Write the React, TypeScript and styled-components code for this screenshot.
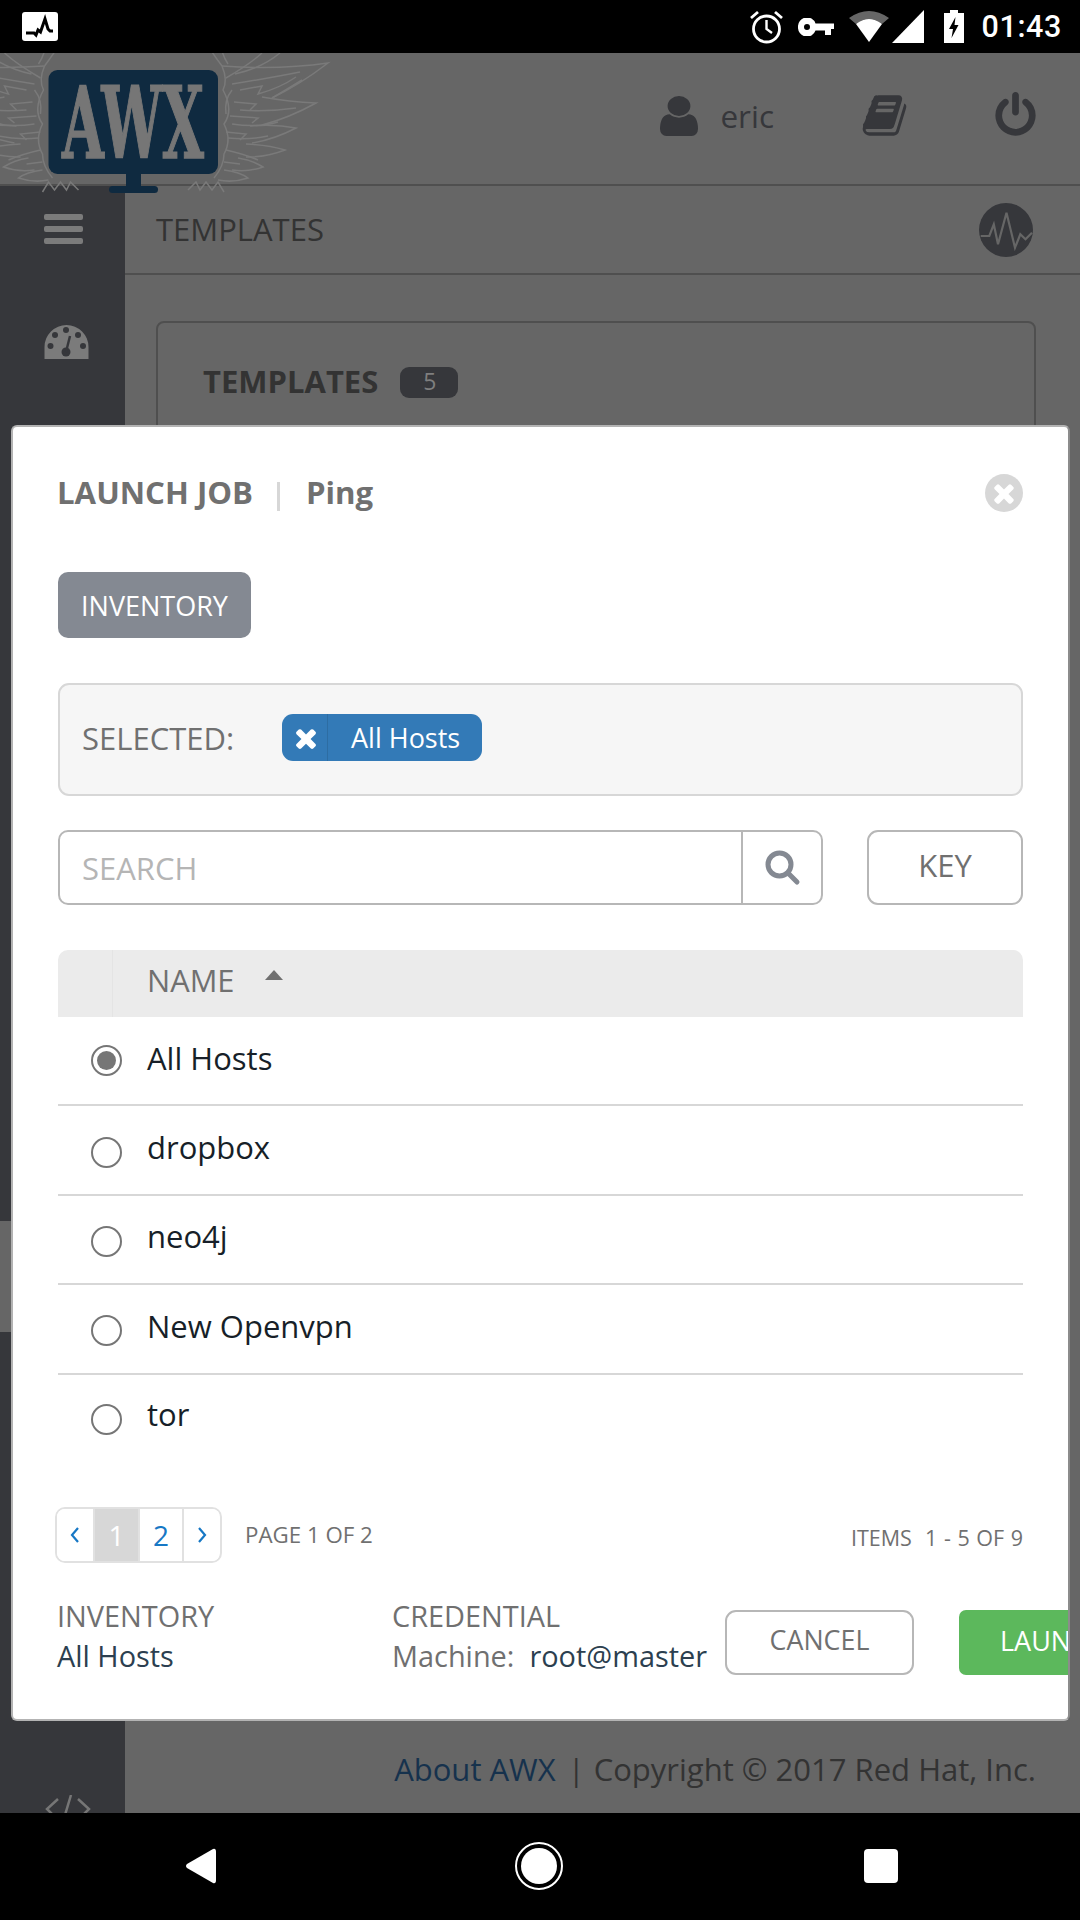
import React from 'react';
import styled, { createGlobalStyle } from 'styled-components';

const Global = createGlobalStyle`
  html, body { margin: 0; padding: 0; background: #000; }
  #root { width: 1080px; height: 1920px; overflow: hidden; }
  * { box-sizing: border-box; }
`;

const Page = styled.div`
  width: 1080px; height: 1920px; display: flex; flex-direction: column;
  font-family: "Open Sans", "Liberation Sans", sans-serif; background: #000;
`;
const StatusBar = styled.div`
  height: 53px; flex: none; background: #000; display: flex; align-items: center; padding: 0 18px 0 22px; color: #fff;
`;
const AppBadge = styled.svg`width: 36px; height: 29px;`;
const StatusRight = styled.div`margin-left: auto; display: flex; align-items: center;`;
const StatusGlyph = styled.svg<{ $mr: number }>`display: block; margin-right: ${p => p.$mr}px;`;
const Clock = styled.span`
  font-family: Roboto, "Liberation Sans", sans-serif; font-size: 30.5px; font-weight: 500; color: #fff; letter-spacing: 0.6px;
`;

const Screen = styled.div`position: relative; flex: 1; overflow: hidden; background: #666; display: flex; flex-direction: column;`;
const Header = styled.header`
  height: 133px; flex: none; border-bottom: 2px solid #4f4f4f; display: flex; align-items: center; justify-content: flex-end; padding: 0 41px 6px 0; position: relative; z-index: 2;
`;
const LogoArt = styled.svg`position: absolute; left: 0; top: 0; overflow: visible;`;
const UserName = styled.span`font-size: 31.5px; color: #36373b; margin: 0 87px 0 22px;`;
const HeadIcon = styled.svg<{ $mr?: number }>`display: block; fill: #36373b; margin-right: ${p => p.$mr ?? 0}px;`;
const Body = styled.div`flex: 1; display: flex; min-height: 0;`;
const Sidebar = styled.nav`width: 125px; flex: none; background: #36373b; display: flex; flex-direction: column; overflow: hidden;`;
const SideItem = styled.div<{ $h: number; $active?: boolean; $mt?: number }>`
  height: ${p => p.$h}px; margin-top: ${p => p.$mt ?? 0}px; flex: none; display: flex; align-items: flex-start; padding-left: 44px;
  background: ${p => (p.$active ? '#666' : 'transparent')};
`;
const Burger = styled.div`width: 39px; margin-top: 28px; display: flex; flex-direction: column; gap: 6px;`;
const BurgerBar = styled.span`height: 6px; border-radius: 2px; background: #7b7b7b;`;
const Gauge = styled.svg`display: block; margin-top: 49px;`;
const CodeIcon = styled.svg`display: block; margin-left: 1px;`;
const Main = styled.main`flex: 1; display: flex; flex-direction: column; min-width: 0;`;
const Crumbs = styled.div`
  height: 89px; flex: none; border-bottom: 2px solid #4f4f4f; display: flex; align-items: center; justify-content: space-between; padding: 0 47px 0 31px;
`;
const CrumbText = styled.span`font-size: 31px; color: #333; position: relative; top: -1px;`;
const Card = styled.section`
  flex: 1; margin: 46px 44px 0 31px; border: 2px solid #4f4f4f; border-radius: 8px; padding: 38px 45px; min-height: 0;
  display: flex; align-items: flex-start; gap: 22px;
`;
const CardTitle = styled.h2`margin: 0; font-size: 31px; font-weight: 700; line-height: 40px; color: #333;`;
const Badge = styled.span`
  width: 58px; height: 31px; margin-top: 6px; background: #36373b; border-radius: 9px; color: #7f7f7f; font-size: 23px; line-height: 1; display: flex; align-items: center; justify-content: center; padding: 0 0 3px 1px;
`;
const Footer = styled.footer`
  height: 93px; flex: none; padding: 27px 44px 0 0; text-align: right; font-size: 31px; line-height: 44px; color: #333; white-space: nowrap;
`;
const FooterLink = styled.span`color: #16324d;`;
const FooterBar = styled.span`margin: 0 9px 0 12px;`;

const Modal = styled.div`
  position: absolute; z-index: 5; left: 11px; top: 372px; width: 1059px; height: 1296px; background: #fff;
  border: 2px solid #b3b3b3; border-right-color: #8c8c8c; border-radius: 6px; padding: 43px 45px 0 45px; overflow: hidden;
`;
const TitleRow = styled.div`height: 46px; display: flex; align-items: center; font-size: 31.2px; font-weight: 700; color: #707070; line-height: 46px;`;
const TitleText = styled.span`position: relative; top: -1px; left: -1px;`;
const TitleDivider = styled.span`width: 3px; height: 29px; background: #d7d7d7; margin: 6px 27px 0 23px;`;
const CloseBtn = styled.svg`margin-left: auto; display: block;`;
const Tab = styled.div`
  margin-top: 56px; width: 193px; height: 66px; border-radius: 10px; background: #848992; color: #fff; font-size: 27px; display: flex; align-items: center; justify-content: center;
`;
const SelectedBox = styled.div`
  margin-top: 45px; height: 113px; border: 2px solid #d7d7d7; border-radius: 11px; background: #f6f6f6; display: flex; align-items: center; padding: 0 0 0 22px;
`;
const SelectedLabel = styled.span`font-size: 31px; color: #707070; width: 200px; position: relative; top: -2px;`;
const Chip = styled.div`
  width: 200px; height: 47px; border-radius: 11px; background: #337ab7; color: #fff; display: flex; align-items: stretch; font-size: 27px; position: relative; top: -2px;
`;
const ChipClose = styled.div`width: 46px; border-right: 1px solid #2d6da3; display: flex; align-items: center; justify-content: center; padding: 1px 0 0 2px;`;
const ChipText = styled.span`padding-left: 23px; display: flex; align-items: center; padding-bottom: 1px;`;
const SearchRow = styled.div`margin-top: 34px; height: 75px; display: flex; gap: 44px;`;
const SearchGroup = styled.div`flex: 1; border: 2px solid #b7b7b7; border-radius: 10px; display: flex;`;
const SearchField = styled.div`flex: 1; padding-left: 22px; display: flex; align-items: center; font-size: 31px; color: #b5b5b5;`;
const SearchBtn = styled.div`width: 80px; border-left: 2px solid #b7b7b7; display: flex; align-items: center; justify-content: center; padding-left: 2px;`;
const OutlineBtn = styled.div<{ $w: number; $h: number; $fs: number }>`
  width: ${p => p.$w}px; height: ${p => p.$h}px; flex: none; border: 2.5px solid #b7b7b7; border-radius: 11px; color: #707070; font-size: ${p => p.$fs}px; display: flex; align-items: center; justify-content: center; padding-bottom: 6px;
`;
const Table = styled.div`margin-top: 45px;`;
const TableHead = styled.div`
  height: 67px; background: #ebebeb; border-radius: 10px 10px 0 0; display: flex; align-items: center; color: #707070; font-size: 30.8px;
`;
const HeadCheckCell = styled.div`width: 55px; height: 100%; border-right: 1px solid #e4e4e4;`;
const HeadName = styled.span`margin-left: 34px; position: relative; top: -4px;`;
const Caret = styled.span`
  width: 0; height: 0; margin: 0 0 0 31px; border-left: 9.5px solid transparent; border-right: 9.5px solid transparent; border-bottom: 10px solid #707070; position: relative; top: -9px;
`;
const Row = styled.div<{ $last?: boolean }>`
  height: ${p => (p.$last ? 85.4 : 89.4)}px; display: flex; align-items: center; border-bottom: ${p => (p.$last ? 'none' : '2.5px solid #d7d7d7')}; color: #171f28; font-size: 31px;
`;
const Radio = styled.span<{ $on?: boolean }>`
  width: 31px; height: 31px; margin: ${p => (p.$on ? 0 : 4)}px 0 0 33px; border: 2px solid #767676; border-radius: 50%; display: flex; align-items: center; justify-content: center; flex: none;
  &::after { content: ''; width: 19px; height: 19px; border-radius: 50%; background: ${p => (p.$on ? '#767676' : 'transparent')}; }
`;
const RowName = styled.span`margin-left: 25px; position: relative; top: -3px;`;
const PagerRow = styled.div`margin: 47px 0 0 -3px; height: 56px; display: flex; align-items: center;`;
const Pager = styled.div`height: 56px; width: 167px; border: 2.5px solid #e1e1e1; border-radius: 10px; display: flex; overflow: hidden; background: #fff;`;
const PageCell = styled.div<{ $w: number; $active?: boolean }>`
  width: ${p => p.$w}px; flex: none; display: flex; align-items: center; justify-content: center; font-size: 28px;
  color: ${p => (p.$active ? '#fff' : '#1778c5')}; background: ${p => (p.$active ? '#d7d7d7' : '#fff')};
  border-right: 2.5px solid #e1e1e1;
  &:last-child { border-right: none; }
`;
const PageLabel = styled.span`margin-left: 23px; font-size: 22.3px; color: #707070;`;
const ItemsLabel = styled.span`margin-left: auto; font-size: 21.5px; color: #707070; word-spacing: 1px; position: relative; top: 3px;`;
const Summary = styled.div`margin: 33px 0 0 -1px; display: flex; align-items: flex-start;`;
const SummaryCol = styled.div<{ $w: number }>`width: ${p => p.$w}px; flex: none; font-size: 28.9px; line-height: 40px; white-space: nowrap;`;
const SummaryLabel = styled.div`color: #707070;`;
const SummaryValue = styled.div`color: #2c3f50;`;
const SummaryMuted = styled.span`color: #707070; margin-right: 15px;`;
const ActionSlot = styled.div`margin-top: 14px; flex: none; display: flex; gap: 45px;`;
const LaunchBtn = styled.div`
  height: 65px; width: 180px; flex: none; background: #5cb85c; border-radius: 7px; color: #fff; font-size: 27px; display: flex; align-items: center; padding: 0 0 4px 41px;
`;
const NavBar = styled.div`
  height: 107px; flex: none; background: #000; display: flex; align-items: center; padding-left: 185px; padding-bottom: 1px;
`;
const NavBack = styled.svg`display: block; margin-right: 298px;`;
const HomeRing = styled.div`
  width: 48px; height: 48px; margin-right: 301px; border-radius: 50%; border: 2px solid #fff; background: #000;
  display: flex; align-items: center; justify-content: center;
  &::after { content: ''; width: 36px; height: 36px; border-radius: 50%; background: #fff; }
`;
const NavSquare = styled.div`width: 34px; height: 34px; border-radius: 4px; background: #fff;`;

const D = {
  user: 'M1536 1399q0 109-62.500 187t-150.500 78h-854q-88 0-150.500-78t-62.500-187q0-85 8.500-160.500t31.500-152 58.500-131 94-89 134.500-34.500q131 128 313 128t313-128q76 0 134.500 34.500t94 89 58.500 131 31.500 152 8.500 160.500zm-256-887q0 159-112.500 271.500t-271.500 112.500-271.500-112.500-112.500-271.500 112.500-271.500 271.500-112.500 271.500 112.500 112.500 271.500z',
  book: 'M1703 478q40 57 18 129l-275 906q-19 64-76.500 107.500t-122.500 43.500h-923q-77 0-148.500-53.500t-99.500-131.500q-24-67-2-127 0-4 3-27t4-37q1-8-3-21.500t-3-19.500q2-11 8-21t16.500-23.500 16.500-23.500q23-38 45-91.500t30-91.500q3-10 .5-30t-.5-28q3-11 17-28t17-23q21-36 42-92t25-90q1-9-2.500-32t.5-28q4-13 22-30.500t22-22.500q19-26 42.500-84.500t27.500-96.500q1-8-3-25.500t-2-26.500q2-8 9-18t18-23 17-21q8-12 16.500-30.500t15-35 16-36 19.500-32 26.500-23.500 36-11.500 47.500 5.500l-1 3q38-9 51-9h761q74 0 114 56t18 130l-274 906q-36 119-71.500 153.500t-128.500 34.500h-869q-27 0-38 15-11 16-1 43 24 70 144 70h923q29 0 56-15.500t35-41.500l300-987q7-22 5-57 38 15 59 43zm-1064 2q-4 13 2 22.500t20 9.500h608q13 0 25.500-9.500t16.500-22.500l21-64q4-13-2-22.500t-20-9.500h-608q-13 0-25.500 9.500t-16.500 22.500zm-83 256q-4 13 2 22.500t20 9.500h608q13 0 25.500-9.500t16.500-22.500l21-64q4-13-2-22.500t-20-9.500h-608q-13 0-25.500 9.500t-16.500 22.500z',
  power: 'M1664 896q0 156-61 298t-164 245-245 164-298 61-298-61-245-164-164-245-61-298q0-182 80.500-343t226.500-270q43-32 95.500-25t83.500 50q32 42 24.500 94.500t-49.500 84.500q-98 74-151.500 181t-53.500 228q0 104 40.500 198.500t109.500 163.500 163.500 109.500 198.500 40.500 198.500-40.500 163.500-109.500 109.500-163.500 40.500-198.500q0-121-53.500-228t-151.500-181q-42-32-49.500-84.500t24.500-94.500q31-43 84-50t95 25q146 109 226.500 270t80.500 343zm-640-768v640q0 52-38 90t-90 38-90-38-38-90v-640q0-52 38-90t90-38 90 38 38 90z',
  times: 'M1490 1322q0 40-28 68l-136 136q-28 28-68 28t-68-28l-294-294-294 294q-28 28-68 28t-68-28l-136-136q-28-28-28-68t28-68l294-294-294-294q-28-28-28-68t28-68l136-136q28-28 68-28t68 28l294 294 294-294q28-28 68-28t68 28l136 136q28 28 28 68t-28 68l-294 294 294 294q28 28 28 68z',
};

const feathers: [number, number, number, number, number, number, number, number][] = [
  [222, 16, 280, 20, 328, 13, 272, 48],
  [262, 47, 290, 52, 316, 53, 262, 75],
  [250, 76, 275, 74, 296, 78, 252, 93],
  [246, 94, 268, 95, 285, 100, 246, 107],
  [238, 108, 252, 110, 263, 117, 232, 120],
  [224, 120, 240, 122, 248, 128, 218, 130],
];
const veins = [
  'M232 34 Q270 28 300 22', 'M235 24 Q262 18 280 3', 'M240 40 L262 36 L258 44 Q280 38 296 27', 'M226 28 Q250 14 262 3',
  'M240 60 Q268 62 296 58', 'M234 52 L256 54 L250 60', 'M230 66 L258 68 L252 73', 'M232 74 Q258 78 278 72', 'M228 88 Q250 90 268 86',
  'M226 82 L246 84 L240 90', 'M226 100 Q244 104 258 110', 'M224 112 L240 114',
  'M226 64 Q224 50 232 40', 'M222 16 Q216 8 212 2', 'M228 14 Q224 8 222 1', 'M272 48 Q286 40 302 30',
  'M188 140 L196 132 L200 140 L206 132 L212 140 L218 132 L224 142',
];
const Wing = () => (
  <g fill="none" stroke="#7a7a7a" strokeWidth={1.5} transform="translate(0,-3)">
    {feathers.map((f, i) => (
      <path key={i} d={`M${f[0]} ${f[1]} Q${f[2]} ${f[3]} ${f[4]} ${f[5]} Q${(f[4] + f[6]) / 2} ${(f[5] + f[7]) / 2 + 4} ${f[6]} ${f[7]}`} />
    ))}
    {veins.map((v, i) => <path key={i} d={v} />)}
    <path d="M222 16 Q228 30 223 40 Q234 60 224 74 Q232 90 224 104 Q224 116 214 128" />
  </g>
);

export default function App() {
  const rows = ['All Hosts', 'dropbox', 'neo4j', 'New Openvpn', 'tor'];
  return (
    <Page>
      <Global />
      <StatusBar>
        <AppBadge viewBox="0 0 36 29">
          <rect width="36" height="29" rx="3" fill="#fff" />
          <path d="M4 21 H12 L14 23 L16 18 L18.500 20 L23 7 L26 17 L28 19 L31 19" fill="none" stroke="#000" strokeWidth="3" />
        </AppBadge>
        <StatusRight>
          <StatusGlyph $mr={15} width="33" height="35" viewBox="0 0 33 35">
            <circle cx="16.500" cy="20" r="13" fill="none" stroke="#fff" strokeWidth="2.800" />
            <path d="M16.500 11 V20 L22 24" fill="none" stroke="#fff" strokeWidth="2.400" />
            <path d="M1 9 L8 3 M32 9 L25 3" stroke="#fff" strokeWidth="2.800" />
          </StatusGlyph>
          <StatusGlyph $mr={15} width="36" height="18" viewBox="0 0 36 18">
            <path d="M0 9a9 9 0 0 1 17.500-3.500 H36 V11 H33 V17 H27 V12.500 H17.500 A9 9 0 0 1 0 9z M6 9a3 3 0 1 0 6 0a3 3 0 1 0-6 0z" fill="#fff" fillRule="evenodd" />
          </StatusGlyph>
          <StatusGlyph $mr={3} width="40" height="33" viewBox="0 0 40 33">
            <path d="M0 8 Q20 -6 40 8 L33 14 Q20 4 7 14z" fill="#666" />
            <path d="M7 14 Q20 4 33 14 L20 32z" fill="#fff" />
          </StatusGlyph>
          <StatusGlyph $mr={20} width="32" height="33" viewBox="0 0 32 33">
            <path d="M0 33 L32 0 V33z" fill="#fff" />
          </StatusGlyph>
          <StatusGlyph $mr={18} width="20" height="33" viewBox="0 0 20 33">
            <path d="M6 0 H14 V3 H20 V33 H0 V3 H6z" fill="#fff" />
            <path d="M11.500 7 L5 19 H9 L7.500 28 L14.500 15 H10.500z" fill="#000" />
          </StatusGlyph>
          <Clock>01:43</Clock>
        </StatusRight>
      </StatusBar>

      <Screen>
        <Header>
          <LogoArt width="340" height="145" viewBox="0 0 340 145">
            <Wing />
            <g transform="translate(266.500,0) scale(-1,1)"><Wing /></g>
            <rect x="48.500" y="17" width="169.500" height="104" rx="9" fill="#0f2a40" />
            <rect x="126" y="120" width="15" height="14" fill="#0f2a40" />
            <rect x="109" y="133" width="49" height="7" rx="3.500" fill="#0f2a40" />
            <text x="62" y="105" fontFamily='"DejaVu Serif", serif' fontWeight="700" fontSize="100" fill="#767676" stroke="#767676" strokeWidth="1.500" textLength="142" lengthAdjust="spacingAndGlyphs">AWX</text>
          </LogoArt>
          <HeadIcon width="38" height="40" viewBox="256 128 1280 1536" preserveAspectRatio="none"><path d={D.user} /></HeadIcon>
          <UserName>eric</UserName>
          <HeadIcon $mr={84} width="47" height="47" viewBox="0 0 1792 1792"><path d={D.book} /></HeadIcon>
          <HeadIcon width="47" height="47" viewBox="0 0 1792 1792"><path d={D.power} /></HeadIcon>
        </Header>
        <Body>
          <Sidebar>
            <SideItem $h={88}>
              <Burger><BurgerBar /><BurgerBar /><BurgerBar /></Burger>
            </SideItem>
            <SideItem $h={111}>
              <Gauge width="46" height="38" viewBox="0 0 46 38">
                <path d="M0.500 36 V24 A22 22 0 0 1 44.500 24 V36z" fill="#7b7b7b" />
                <g fill="#36373b">
                  <circle cx="22" cy="7" r="3" /><circle cx="11" cy="12" r="3" /><circle cx="34" cy="12" r="3" />
                  <circle cx="6.500" cy="23" r="3" /><circle cx="39" cy="23" r="3" /><circle cx="22" cy="29" r="4.500" />
                </g>
                <path d="M22 29 L26 13" stroke="#36373b" strokeWidth="2.500" />
              </Gauge>
            </SideItem>
            <SideItem $h={111} $mt={836} $active />
            <SideItem $h={24} $mt={463}>
              <CodeIcon width="46" height="24" viewBox="0 0 46 24">
                <path d="M13 4 L2 14 L8 20 M33 4 L44 14 L38 20 M26 0 L20 20" fill="none" stroke="#767676" strokeWidth="2.500" />
              </CodeIcon>
            </SideItem>
          </Sidebar>
          <Main>
            <Crumbs>
              <CrumbText>TEMPLATES</CrumbText>
              <svg width="54" height="54" viewBox="0 0 54 54">
                <circle cx="27" cy="27" r="27" fill="#36373b" />
                <path d="M1.700 33 H10.300 L14.800 21.300 L19 41.300 L27.500 9.700 L36 44.700 L41.300 31.300 L46.500 36.300 L53 29.700" fill="none" stroke="#666" strokeWidth="2.200" />
              </svg>
            </Crumbs>
            <Card>
              <CardTitle>TEMPLATES</CardTitle>
              <Badge>5</Badge>
            </Card>
            <Footer>
              <FooterLink>About AWX</FooterLink><FooterBar>|</FooterBar>Copyright © 2017 Red Hat, Inc.
            </Footer>
          </Main>
        </Body>

        <Modal>
          <TitleRow>
            <TitleText>LAUNCH JOB</TitleText>
            <TitleDivider />
            <TitleText>Ping</TitleText>
            <CloseBtn width="38" height="38" viewBox="0 0 38 38">
              <circle cx="19" cy="19" r="19" fill="#d7d7d7" />
              <g transform="translate(4.200,4.200) scale(0.0165)"><path d={D.times} fill="#fff" /></g>
            </CloseBtn>
          </TitleRow>
          <Tab>INVENTORY</Tab>
          <SelectedBox>
            <SelectedLabel>SELECTED:</SelectedLabel>
            <Chip>
              <ChipClose>
                <svg width="30" height="30" viewBox="0 0 1792 1792"><path d={D.times} fill="#fff" /></svg>
              </ChipClose>
              <ChipText>All Hosts</ChipText>
            </Chip>
          </SelectedBox>
          <SearchRow>
            <SearchGroup>
              <SearchField>SEARCH</SearchField>
              <SearchBtn>
                <svg width="36" height="36" viewBox="0 0 36 36">
                  <circle cx="14.500" cy="14.500" r="11.500" fill="none" stroke="#848992" strokeWidth="5" />
                  <path d="M23 23 L32 32" stroke="#848992" strokeWidth="5" strokeLinecap="round" />
                </svg>
              </SearchBtn>
            </SearchGroup>
            <OutlineBtn $w={156} $h={75} $fs={31}>KEY</OutlineBtn>
          </SearchRow>
          <Table>
            <TableHead>
              <HeadCheckCell />
              <HeadName>NAME</HeadName>
              <Caret />
            </TableHead>
            {rows.map((r, i) => (
              <Row key={r} $last={i === rows.length - 1}>
                <Radio $on={i === 0} />
                <RowName>{r}</RowName>
              </Row>
            ))}
          </Table>
          <PagerRow>
            <Pager>
              <PageCell $w={38}>
                <svg width="12" height="18" viewBox="0 0 12 18"><path d="M9 2 L3 9 L9 16" fill="none" stroke="#1778c5" strokeWidth="2.200" /></svg>
              </PageCell>
              <PageCell $w={45} $active>1</PageCell>
              <PageCell $w={44}>2</PageCell>
              <PageCell $w={35}>
                <svg width="12" height="18" viewBox="0 0 12 18"><path d="M3 2 L9 9 L3 16" fill="none" stroke="#1778c5" strokeWidth="2.200" /></svg>
              </PageCell>
            </Pager>
            <PageLabel>PAGE 1 OF 2</PageLabel>
            <ItemsLabel>ITEMS&nbsp; 1 - 5 OF 9</ItemsLabel>
          </PagerRow>
          <Summary>
            <SummaryCol $w={335}>
              <SummaryLabel>INVENTORY</SummaryLabel>
              <SummaryValue>All Hosts</SummaryValue>
            </SummaryCol>
            <SummaryCol $w={333}>
              <SummaryLabel>CREDENTIAL</SummaryLabel>
              <SummaryValue><SummaryMuted>Machine:</SummaryMuted>root@master</SummaryValue>
            </SummaryCol>
            <ActionSlot>
              <OutlineBtn $w={189} $h={65} $fs={26.8}>CANCEL</OutlineBtn>
              <LaunchBtn>LAUNCH</LaunchBtn>
            </ActionSlot>
          </Summary>
        </Modal>
      </Screen>

      <NavBar>
        <NavBack width="32" height="36" viewBox="0 0 32 36">
          <path d="M28 1 Q31 0 31 4 V32 Q31 36 28 35 L2 20 Q0 18 2 16z" fill="#fff" />
        </NavBack>
        <HomeRing />
        <NavSquare />
      </NavBar>
    </Page>
  );
}
